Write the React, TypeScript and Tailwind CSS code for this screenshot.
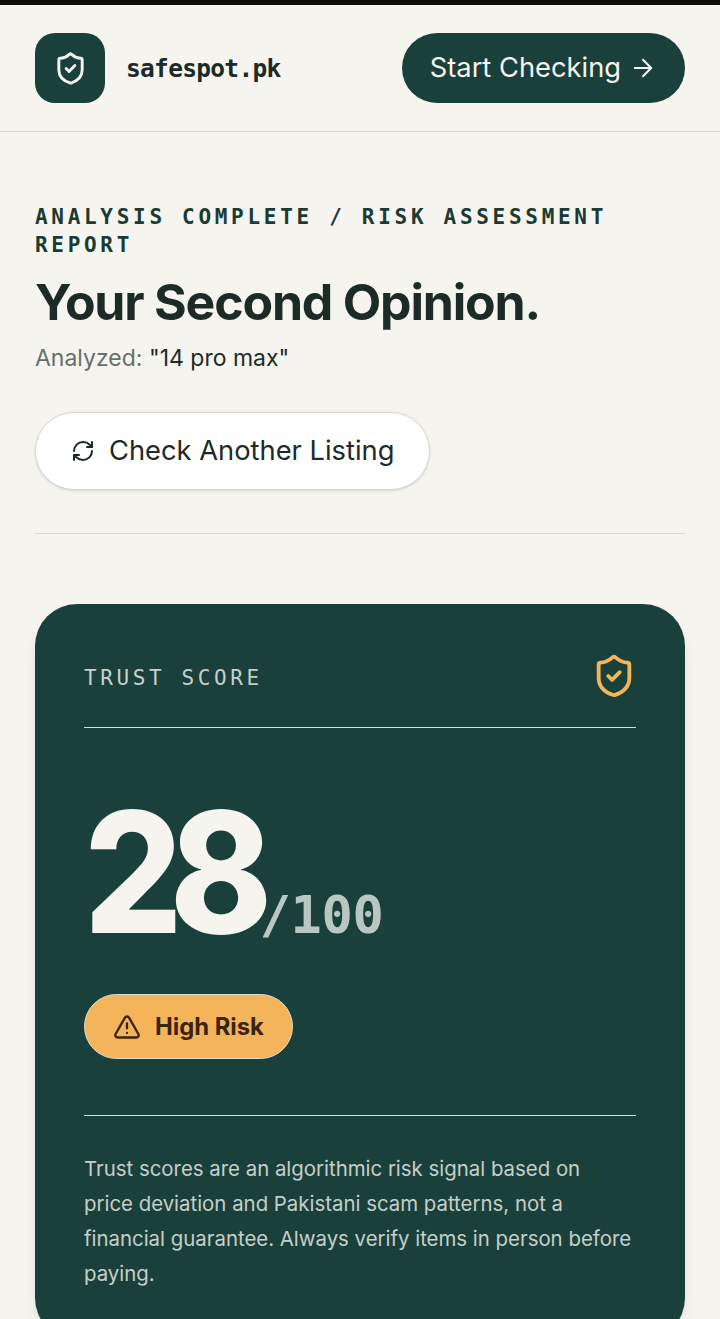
import { ArrowRight, RefreshCw, ShieldCheck, TriangleAlert } from 'lucide-react';

const sans = "font-['Inter',sans-serif]";
const mono = "font-['DejaVu_Sans_Mono',monospace]";

export default function App() {
  return (
    <div className={`h-[1319px] overflow-hidden bg-[#f5f4ef] text-[#1c2b27] ${sans}`}>
      <div className="h-[5px] bg-[#0f0e0b]" />

      {/* Header */}
      <header className="flex items-center justify-between border-b border-[#d9d8d1] px-[35px] pt-[28px] pb-[28px]">
        <div className="flex items-center gap-[21px]">
          <div className="flex h-[70px] w-[70px] items-center justify-center rounded-[20px] bg-[#1a403b]">
            <ShieldCheck className="h-[35px] w-[35px] text-[#f5f4ef]" strokeWidth={2} />
          </div>
          <span className={`pt-[2px] text-[24.5px] font-bold tracking-[-0.7px] ${mono}`}>safespot.pk</span>
        </div>
        <button className="flex h-[70px] items-center gap-[8px] rounded-full bg-[#1a403b] px-[28px] text-[27.3px] text-[#f5f4ef]">
          Start Checking
          <ArrowRight className="h-[28px] w-[28px]" strokeWidth={1.75} />
        </button>
      </header>

      <main className="px-[35px]">
        {/* Title block */}
        <section className="border-b border-[#d9d8d1] pt-[71px] pb-[43px]">
          <p className={`text-[21px] leading-[28px] font-bold tracking-[3.7px] text-[#1a3a34] ${mono}`}>
            ANALYSIS COMPLETE / RISK ASSESSMENT REPORT
          </p>
          <h1 className="mt-[15px] text-[50px] leading-[56px] font-bold tracking-[-1.2px]">Your Second Opinion.</h1>
          <p className="mt-[11px] text-[23px] leading-[35px]">
            <span className="text-[#64706b]">Analyzed: </span>"14 pro max"
          </p>
          <button className="mt-[36px] flex h-[78px] items-center gap-[14px] rounded-full border border-[#d9d8d1] bg-white px-[35px] text-[27.3px] shadow-sm">
            <RefreshCw className="h-[24px] w-[24px]" strokeWidth={2} />
            Check Another Listing
          </button>
        </section>

        {/* Trust score card */}
        <section className="mt-[70px] rounded-[42px] bg-[#1a403b] px-[49px] pt-[49px] pb-[49px] text-[#f5f4ef] shadow-lg">
          <div className="flex items-center justify-between border-b border-[#dcdcd2] pb-[28px]">
            <span className={`pt-[4px] text-[21px] leading-[42px] tracking-[3.6px] text-[#c5cfc9] ${mono}`}>TRUST SCORE</span>
            <ShieldCheck className="-mr-[1px] h-[46px] w-[46px] text-[#f4b459]" strokeWidth={2} />
          </div>

          <div className="mt-[60px] mb-[3px] flex items-end">
            <span className="-mr-[15px] inline-block origin-left scale-x-[0.92] text-[168px] leading-[168px] font-extrabold tracking-[-14px]">28</span>
            <span className={`mb-[13px] text-[52px] leading-[56px] font-bold tracking-[-0.4px] text-[#b9c7c2] ${mono}`}>/100</span>
          </div>

          <div className="mt-[35px] inline-flex h-[65px] items-center gap-[14px] rounded-full border border-[#dcdcd2] bg-[#f4b459] px-[28px] text-[23.8px] font-bold text-[#3a2410]">
            <TriangleAlert className="h-[28px] w-[28px]" strokeWidth={2} />
            High Risk
          </div>

          <div className="mt-[56px] border-t border-[#dcdcd2] pt-[35px]">
            <p className="w-[549px] text-[20.4px] leading-[35px] text-[#c5cfc9]">
              Trust scores are an algorithmic risk signal based on price deviation and Pakistani scam patterns, not a financial guarantee. Always verify items in person before paying.
            </p>
          </div>
        </section>
      </main>
    </div>
  );
}
